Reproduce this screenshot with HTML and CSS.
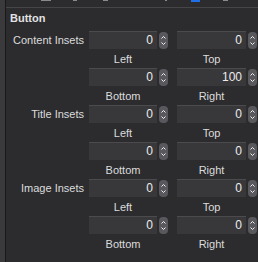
FILE: index.html
```html
<!DOCTYPE html>
<html lang="en">
<head>
    <meta charset="UTF-8">
    <meta name="viewport" content="width=device-width, initial-scale=1.0">
    <title>Button Inspector</title>
    <link rel="stylesheet" href="styles.css">
</head>
<body>
    <div class="edge"></div>

    <div class="panel">
        <!-- Toolbar (icons cut off at the top) -->
        <div class="toolbar">
            <span class="tab-icon" style="margin-left: 35px; width: 10px;"></span>
            <span class="tab-icon" style="margin-left: 22px; width: 4px;"></span>
            <span class="tab-icon" style="margin-left: 26px; width: 5px;"></span>
            <span class="tab-icon" style="margin-left: 57px; width: 2px;"></span>
            <span class="tab-icon active" style="margin-left: 24px; width: 9px;"></span>
            <span class="tab-icon" style="margin-left: 23px; width: 5px;"></span>
        </div>

        <section class="inspector">
            <h2>Button</h2>

            <!-- Content Insets -->
            <div class="inset-row">
                <label class="row-label">Content Insets</label>
                <div class="cell"><div class="field">0</div><div class="stepper"><svg width="9" height="17" viewBox="0 0 9 17"><path d="M2.5 6.5 L4.5 4.5 L6.5 6.5 M2.5 10.5 L4.5 12.5 L6.5 10.5"/></svg></div></div>
                <div class="cell"><div class="field">0</div><div class="stepper"><svg width="9" height="17" viewBox="0 0 9 17"><path d="M2.5 6.5 L4.5 4.5 L6.5 6.5 M2.5 10.5 L4.5 12.5 L6.5 10.5"/></svg></div></div>
            </div>
            <div class="caption-row">
                <span>Left</span><span>Top</span>
            </div>
            <div class="inset-row">
                <label class="row-label"></label>
                <div class="cell"><div class="field">0</div><div class="stepper"><svg width="9" height="17" viewBox="0 0 9 17"><path d="M2.5 6.5 L4.5 4.5 L6.5 6.5 M2.5 10.5 L4.5 12.5 L6.5 10.5"/></svg></div></div>
                <div class="cell"><div class="field">100</div><div class="stepper"><svg width="9" height="17" viewBox="0 0 9 17"><path d="M2.5 6.5 L4.5 4.5 L6.5 6.5 M2.5 10.5 L4.5 12.5 L6.5 10.5"/></svg></div></div>
            </div>
            <div class="caption-row">
                <span>Bottom</span><span>Right</span>
            </div>

            <!-- Title Insets -->
            <div class="inset-row">
                <label class="row-label">Title Insets</label>
                <div class="cell"><div class="field">0</div><div class="stepper"><svg width="9" height="17" viewBox="0 0 9 17"><path d="M2.5 6.5 L4.5 4.5 L6.5 6.5 M2.5 10.5 L4.5 12.5 L6.5 10.5"/></svg></div></div>
                <div class="cell"><div class="field">0</div><div class="stepper"><svg width="9" height="17" viewBox="0 0 9 17"><path d="M2.5 6.5 L4.5 4.5 L6.5 6.5 M2.5 10.5 L4.5 12.5 L6.5 10.5"/></svg></div></div>
            </div>
            <div class="caption-row">
                <span>Left</span><span>Top</span>
            </div>
            <div class="inset-row">
                <label class="row-label"></label>
                <div class="cell"><div class="field">0</div><div class="stepper"><svg width="9" height="17" viewBox="0 0 9 17"><path d="M2.5 6.5 L4.5 4.5 L6.5 6.5 M2.5 10.5 L4.5 12.5 L6.5 10.5"/></svg></div></div>
                <div class="cell"><div class="field">0</div><div class="stepper"><svg width="9" height="17" viewBox="0 0 9 17"><path d="M2.5 6.5 L4.5 4.5 L6.5 6.5 M2.5 10.5 L4.5 12.5 L6.5 10.5"/></svg></div></div>
            </div>
            <div class="caption-row">
                <span>Bottom</span><span>Right</span>
            </div>

            <!-- Image Insets -->
            <div class="inset-row">
                <label class="row-label">Image Insets</label>
                <div class="cell"><div class="field">0</div><div class="stepper"><svg width="9" height="17" viewBox="0 0 9 17"><path d="M2.5 6.5 L4.5 4.5 L6.5 6.5 M2.5 10.5 L4.5 12.5 L6.5 10.5"/></svg></div></div>
                <div class="cell"><div class="field">0</div><div class="stepper"><svg width="9" height="17" viewBox="0 0 9 17"><path d="M2.5 6.5 L4.5 4.5 L6.5 6.5 M2.5 10.5 L4.5 12.5 L6.5 10.5"/></svg></div></div>
            </div>
            <div class="caption-row">
                <span>Left</span><span>Top</span>
            </div>
            <div class="inset-row">
                <label class="row-label"></label>
                <div class="cell"><div class="field">0</div><div class="stepper"><svg width="9" height="17" viewBox="0 0 9 17"><path d="M2.5 6.5 L4.5 4.5 L6.5 6.5 M2.5 10.5 L4.5 12.5 L6.5 10.5"/></svg></div></div>
                <div class="cell"><div class="field">0</div><div class="stepper"><svg width="9" height="17" viewBox="0 0 9 17"><path d="M2.5 6.5 L4.5 4.5 L6.5 6.5 M2.5 10.5 L4.5 12.5 L6.5 10.5"/></svg></div></div>
            </div>
            <div class="caption-row">
                <span>Bottom</span><span>Right</span>
            </div>
        </section>
    </div>
</body>
</html>
```

FILE: styles.css
```css
/* Base */
* {
    margin: 0;
    padding: 0;
    box-sizing: border-box;
}

body {
    display: flex;
    width: 258px;
    height: 262px;
    overflow: hidden;
    background: #2c2c2f;
    color: #dedede;
    font-family: 'Liberation Sans', Arial, sans-serif;
}

/* Left window edge */
.edge {
    width: 6px;
    background: #3a3a3c;
    border-right: 1px solid #19191a;
    flex-shrink: 0;
}

.panel {
    flex: 1;
    display: flex;
    flex-direction: column;
}

/* Toolbar */
.toolbar {
    display: flex;
    height: 8px;
    border-bottom: 1px solid #46464a;
}

.tab-icon {
    height: 1px;
    background: #8a8a8c;
}

.tab-icon.active {
    height: 2px;
    background: #1f6fe8;
}

/* Inspector section */
.inspector {
    padding-top: 3px;
}

h2 {
    font-size: 11px;
    font-weight: bold;
    color: #e2e2e2;
    padding-left: 4px;
    height: 20px;
    line-height: 14px;
}

.inset-row {
    display: flex;
    align-items: center;
    height: 18px;
}

.row-label {
    width: 78px;
    text-align: right;
    font-size: 11px;
    color: #dcdcdc;
    margin-right: 5px;
}

.cell {
    display: flex;
    align-items: center;
    height: 18px;
}

.cell + .cell {
    margin-left: 9px;
}

.field {
    width: 68px;
    height: 18px;
    background: #38383b;
    border-top: 1px solid #4b4b4e;
    text-align: right;
    padding-right: 4px;
    font-size: 12px;
    line-height: 17px;
    color: #ececec;
}

.cell + .cell .field {
    width: 69px;
}

.stepper {
    width: 9px;
    height: 17px;
    margin-left: 2px;
    background: #59595d;
    border-radius: 4px;
}

.stepper svg {
    display: block;
    fill: none;
    stroke: #f2f2f2;
    stroke-width: 1;
}

.caption-row {
    display: flex;
    height: 19px;
    align-items: center;
    padding-left: 83px;
    padding-top: 1px;
    font-size: 11px;
    color: #dcdcdc;
}

.caption-row span {
    width: 68px;
    text-align: center;
}

.caption-row span + span {
    margin-left: 20px;
    width: 69px;
}
```
